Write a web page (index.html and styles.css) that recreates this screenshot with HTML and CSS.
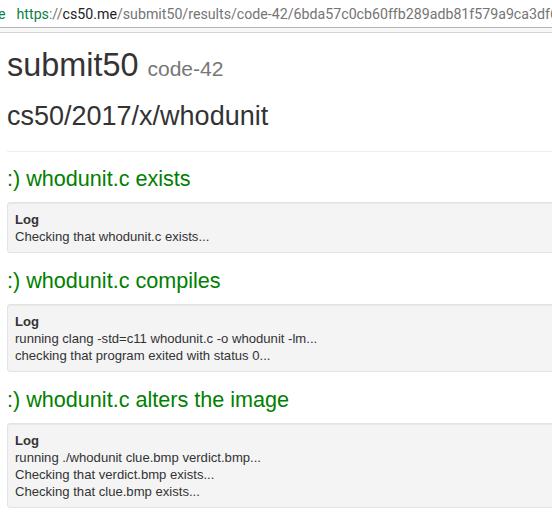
FILE: index.html
```html
<!DOCTYPE html>
<html>
<head>
<meta charset="utf-8">
<title>submit50 code-42</title>
<link rel="stylesheet" href="styles.css">
</head>
<body>
<div class="chrome">
  <span class="secure">e</span>
  <span class="sep"></span>
  <span class="url"><span class="scheme">https</span><span class="rest">://</span><span class="host">cs50.me</span><span class="rest">/submit50/results/code-42/6bda57c0cb60ffb289adb81f579a9ca3df6</span></span>
</div>
<div class="strip"></div>
<main class="container">
  <h1 class="title">submit50 <small class="slug">code-42</small></h1>
  <h2 class="repo">cs50/2017/x/whodunit</h2>
  <hr class="rule">
  <section class="check">
    <h3 class="check-title">:) whodunit.c exists</h3>
    <div class="well">
      <div class="log-label">Log</div>
      <div class="log-line">Checking that whodunit.c exists...</div>
    </div>
  </section>
  <section class="check">
    <h3 class="check-title">:) whodunit.c compiles</h3>
    <div class="well">
      <div class="log-label">Log</div>
      <div class="log-line">running clang -std=c11 whodunit.c -o whodunit -lm...</div>
      <div class="log-line">checking that program exited with status 0...</div>
    </div>
  </section>
  <section class="check">
    <h3 class="check-title">:) whodunit.c alters the image</h3>
    <div class="well">
      <div class="log-label">Log</div>
      <div class="log-line">running ./whodunit clue.bmp verdict.bmp...</div>
      <div class="log-line">Checking that verdict.bmp exists...</div>
      <div class="log-line">Checking that clue.bmp exists...</div>
    </div>
  </section>
</main>
</body>
</html>
```
FILE: styles.css
```css
html, body {
  margin: 0;
  padding: 0;
  overflow: hidden;
  background: #fff;
}

body {
  font-family: "Liberation Sans", Arial, sans-serif;
  color: #333;
}

.chrome {
  height: 27px;
  border-bottom: 1px solid #b3b3b3;
  display: flex;
  align-items: center;
  white-space: nowrap;
  overflow: hidden;
  font-family: Roboto, "Liberation Sans", sans-serif;
  font-size: 14.2px;
}

.secure {
  color: #0b8043;
  margin-left: -2px;
}

.sep {
  width: 1px;
  height: 16px;
  background: #c4c4c4;
  margin: 0 6px 0 5px;
}

.scheme { color: #0b8043; }
.host { color: #222; }
.rest { color: #757575; }

.strip {
  height: 4px;
  background: #f7f7f7;
  border-bottom: 1px solid #d4d4d4;
}

.container {
  width: 800px;
  padding-left: 7px;
}

.title {
  font-size: 32.4px;
  line-height: 1.1;
  font-weight: normal;
  margin: 15px 0 0;
}

.slug {
  font-size: 65%;
  color: #777;
}

.repo {
  font-size: 27px;
  line-height: 1.1;
  font-weight: normal;
  margin: 18px 0 0;
}

.rule {
  border: 0;
  border-top: 1px solid #eee;
  margin: 20px 0 15px;
}

.check-title {
  font-size: 21.6px;
  line-height: 1.1;
  font-weight: normal;
  color: #008000;
  margin: 0 0 11px;
}

.well {
  background: #f4f4f4;
  border: 1px solid #e3e3e3;
  border-radius: 3px;
  box-shadow: inset 0 1px 1px rgba(0, 0, 0, 0.05);
  padding: 8px 7px 7px;
  font-size: 13.1px;
  line-height: 17px;
  margin-bottom: 16.3px;
}

.log-label {
  font-weight: bold;
}
```
